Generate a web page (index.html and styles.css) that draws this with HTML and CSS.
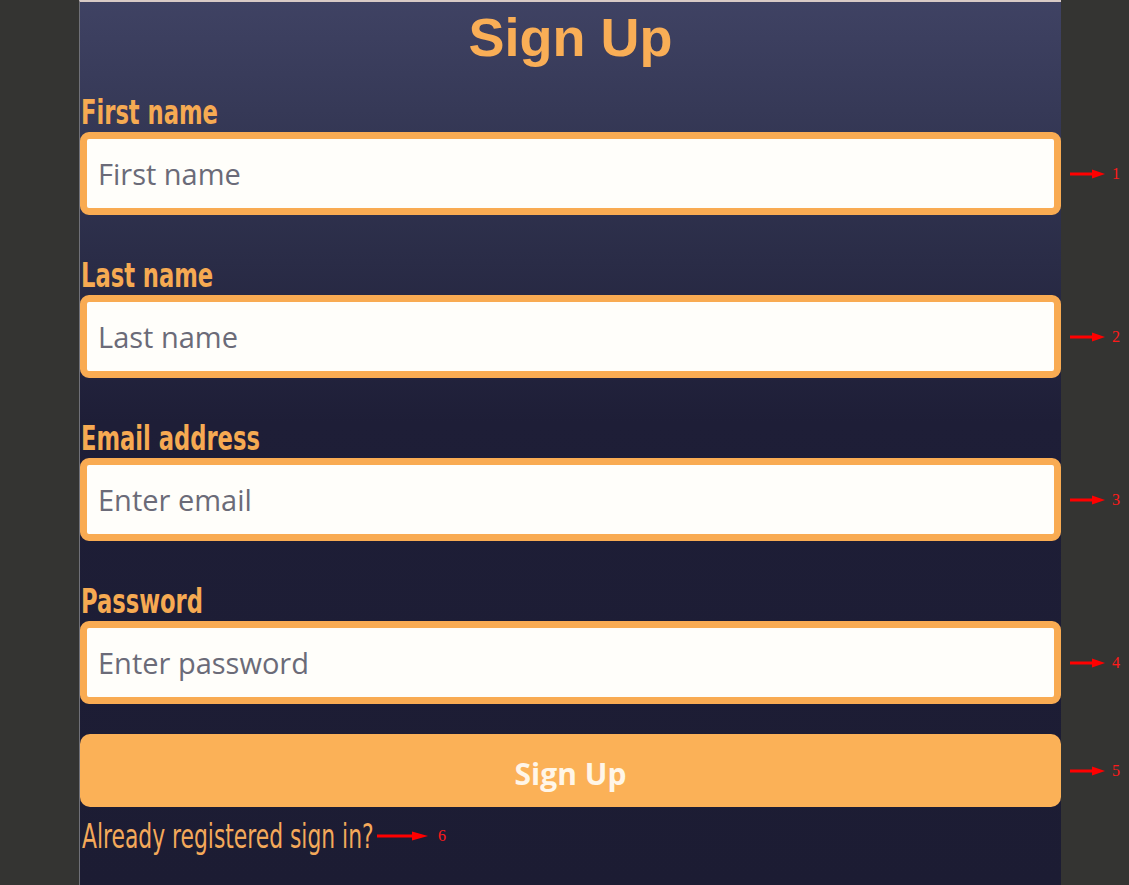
FILE: index.html
```html
<!DOCTYPE html>
<html lang="en">
<head>
<meta charset="utf-8">
<title>Sign Up</title>
<link rel="stylesheet" href="styles.css">
</head>
<body>
<div class="page">
  <form class="panel">
    <h1 class="title">Sign Up</h1>

    <div class="group">
      <label class="label" for="fn"><span class="label-text">First name</span></label>
      <div class="field">
        <input class="input" id="fn" type="text" placeholder="First name">
        <span class="note"><svg class="arrow" width="36" height="10" viewBox="0 0 36 10"><line x1="0" y1="5" x2="26" y2="5" stroke="#ff0000" stroke-width="3"/><polygon points="22,0.5 35,5 22,9.5" fill="#ff0000"/></svg><span class="num">1</span></span>
      </div>
    </div>

    <div class="group">
      <label class="label" for="ln"><span class="label-text">Last name</span></label>
      <div class="field">
        <input class="input" id="ln" type="text" placeholder="Last name">
        <span class="note"><svg class="arrow" width="36" height="10" viewBox="0 0 36 10"><line x1="0" y1="5" x2="26" y2="5" stroke="#ff0000" stroke-width="3"/><polygon points="22,0.5 35,5 22,9.5" fill="#ff0000"/></svg><span class="num">2</span></span>
      </div>
    </div>

    <div class="group">
      <label class="label" for="em"><span class="label-text">Email address</span></label>
      <div class="field">
        <input class="input" id="em" type="email" placeholder="Enter email">
        <span class="note"><svg class="arrow" width="36" height="10" viewBox="0 0 36 10"><line x1="0" y1="5" x2="26" y2="5" stroke="#ff0000" stroke-width="3"/><polygon points="22,0.5 35,5 22,9.5" fill="#ff0000"/></svg><span class="num">3</span></span>
      </div>
    </div>

    <div class="group group-last">
      <label class="label" for="pw"><span class="label-text">Password</span></label>
      <div class="field">
        <input class="input" id="pw" type="password" placeholder="Enter password">
        <span class="note"><svg class="arrow" width="36" height="10" viewBox="0 0 36 10"><line x1="0" y1="5" x2="26" y2="5" stroke="#ff0000" stroke-width="3"/><polygon points="22,0.5 35,5 22,9.5" fill="#ff0000"/></svg><span class="num">4</span></span>
      </div>
    </div>

    <div class="field">
      <button class="button" type="button">Sign Up</button>
      <span class="note"><svg class="arrow" width="36" height="10" viewBox="0 0 36 10"><line x1="0" y1="5" x2="26" y2="5" stroke="#ff0000" stroke-width="3"/><polygon points="22,0.5 35,5 22,9.5" fill="#ff0000"/></svg><span class="num">5</span></span>
    </div>

    <p class="signin">
      <span class="signin-text">Already registered sign in?</span>
      <svg class="arrow arrow-long" width="52" height="10" viewBox="0 0 52 10"><line x1="0" y1="5" x2="40" y2="5" stroke="#ff0000" stroke-width="3"/><polygon points="35,0.5 51,5 35,9.5" fill="#ff0000"/></svg><span class="num">6</span>
    </p>
  </form>
</div>
</body>
</html>
```

FILE: styles.css
```css
* {
  box-sizing: border-box;
}

html,
body {
  margin: 0;
  padding: 0;
}

body {
  background: #343432;
  min-height: 885px;
  overflow: hidden;
}

.page {
  display: flex;
  padding-left: 79px;
}

.panel {
  width: 982px;
  min-height: 885px;
  border-left: 1px solid #6f7078;
  border-top: 2px solid #d8cac6;
  background: linear-gradient(to bottom, #3f4263 0px, #30334f 180px, #1e1e37 420px, #1c1c33 885px);
  display: flex;
  flex-direction: column;
}

.title {
  margin: 0;
  padding-top: 4px;
  height: 90px;
  text-align: center;
  font-family: "Liberation Sans", Arial, sans-serif;
  font-weight: 700;
  font-size: 54px;
  line-height: 62px;
  color: #f9ae56;
}

.group {
  display: flex;
  flex-direction: column;
  margin-bottom: 40px;
}

.group-last {
  margin-bottom: 30px;
}

.label {
  display: block;
  height: 40px;
  padding-left: 1px;
  font-family: "DejaVu Sans Condensed", "DejaVu Sans", sans-serif;
  font-weight: 700;
  font-size: 34px;
  line-height: 40px;
  color: #f6aa52;
  white-space: nowrap;
}

.label-text {
  display: inline-block;
  transform: scaleX(0.74);
  transform-origin: left center;
}

.field {
  position: relative;
  display: flex;
}

.input {
  width: 100%;
  height: 83px;
  border: 7px solid #f9ab52;
  border-radius: 9px;
  background: #fffefa;
  padding: 0 11px;
  font-family: "Open Sans", sans-serif;
  font-size: 29px;
  color: #333;
  outline: none;
}

.input::placeholder {
  color: #6b6b78;
  opacity: 1;
}

.button {
  width: 100%;
  height: 73px;
  border: none;
  border-radius: 10px;
  background: #fbb157;
  color: #fff6e8;
  font-family: "Open Sans", sans-serif;
  font-weight: 700;
  font-size: 30px;
  padding-top: 7px;
  cursor: pointer;
}

.note {
  position: absolute;
  left: calc(100% + 9px);
  top: 50%;
  transform: translateY(-50%);
  display: flex;
  align-items: center;
  gap: 6px;
}

.arrow {
  display: block;
}

.num {
  font-family: "Liberation Serif", "Times New Roman", serif;
  font-size: 16px;
  color: #ff1a1a;
  line-height: 1;
}

.signin {
  margin: 0;
  padding-left: 2px;
  display: flex;
  align-items: center;
  height: 58px;
}

.signin-text {
  display: inline-block;
  width: 285px;
  white-space: nowrap;
  font-family: "DejaVu Sans Condensed", "DejaVu Sans", sans-serif;
  font-size: 33px;
  color: #f4a95a;
  transform: scaleX(0.736);
  transform-origin: left center;
}

.arrow-long {
  margin-left: 10px;
  margin-right: 9px;
}
```
